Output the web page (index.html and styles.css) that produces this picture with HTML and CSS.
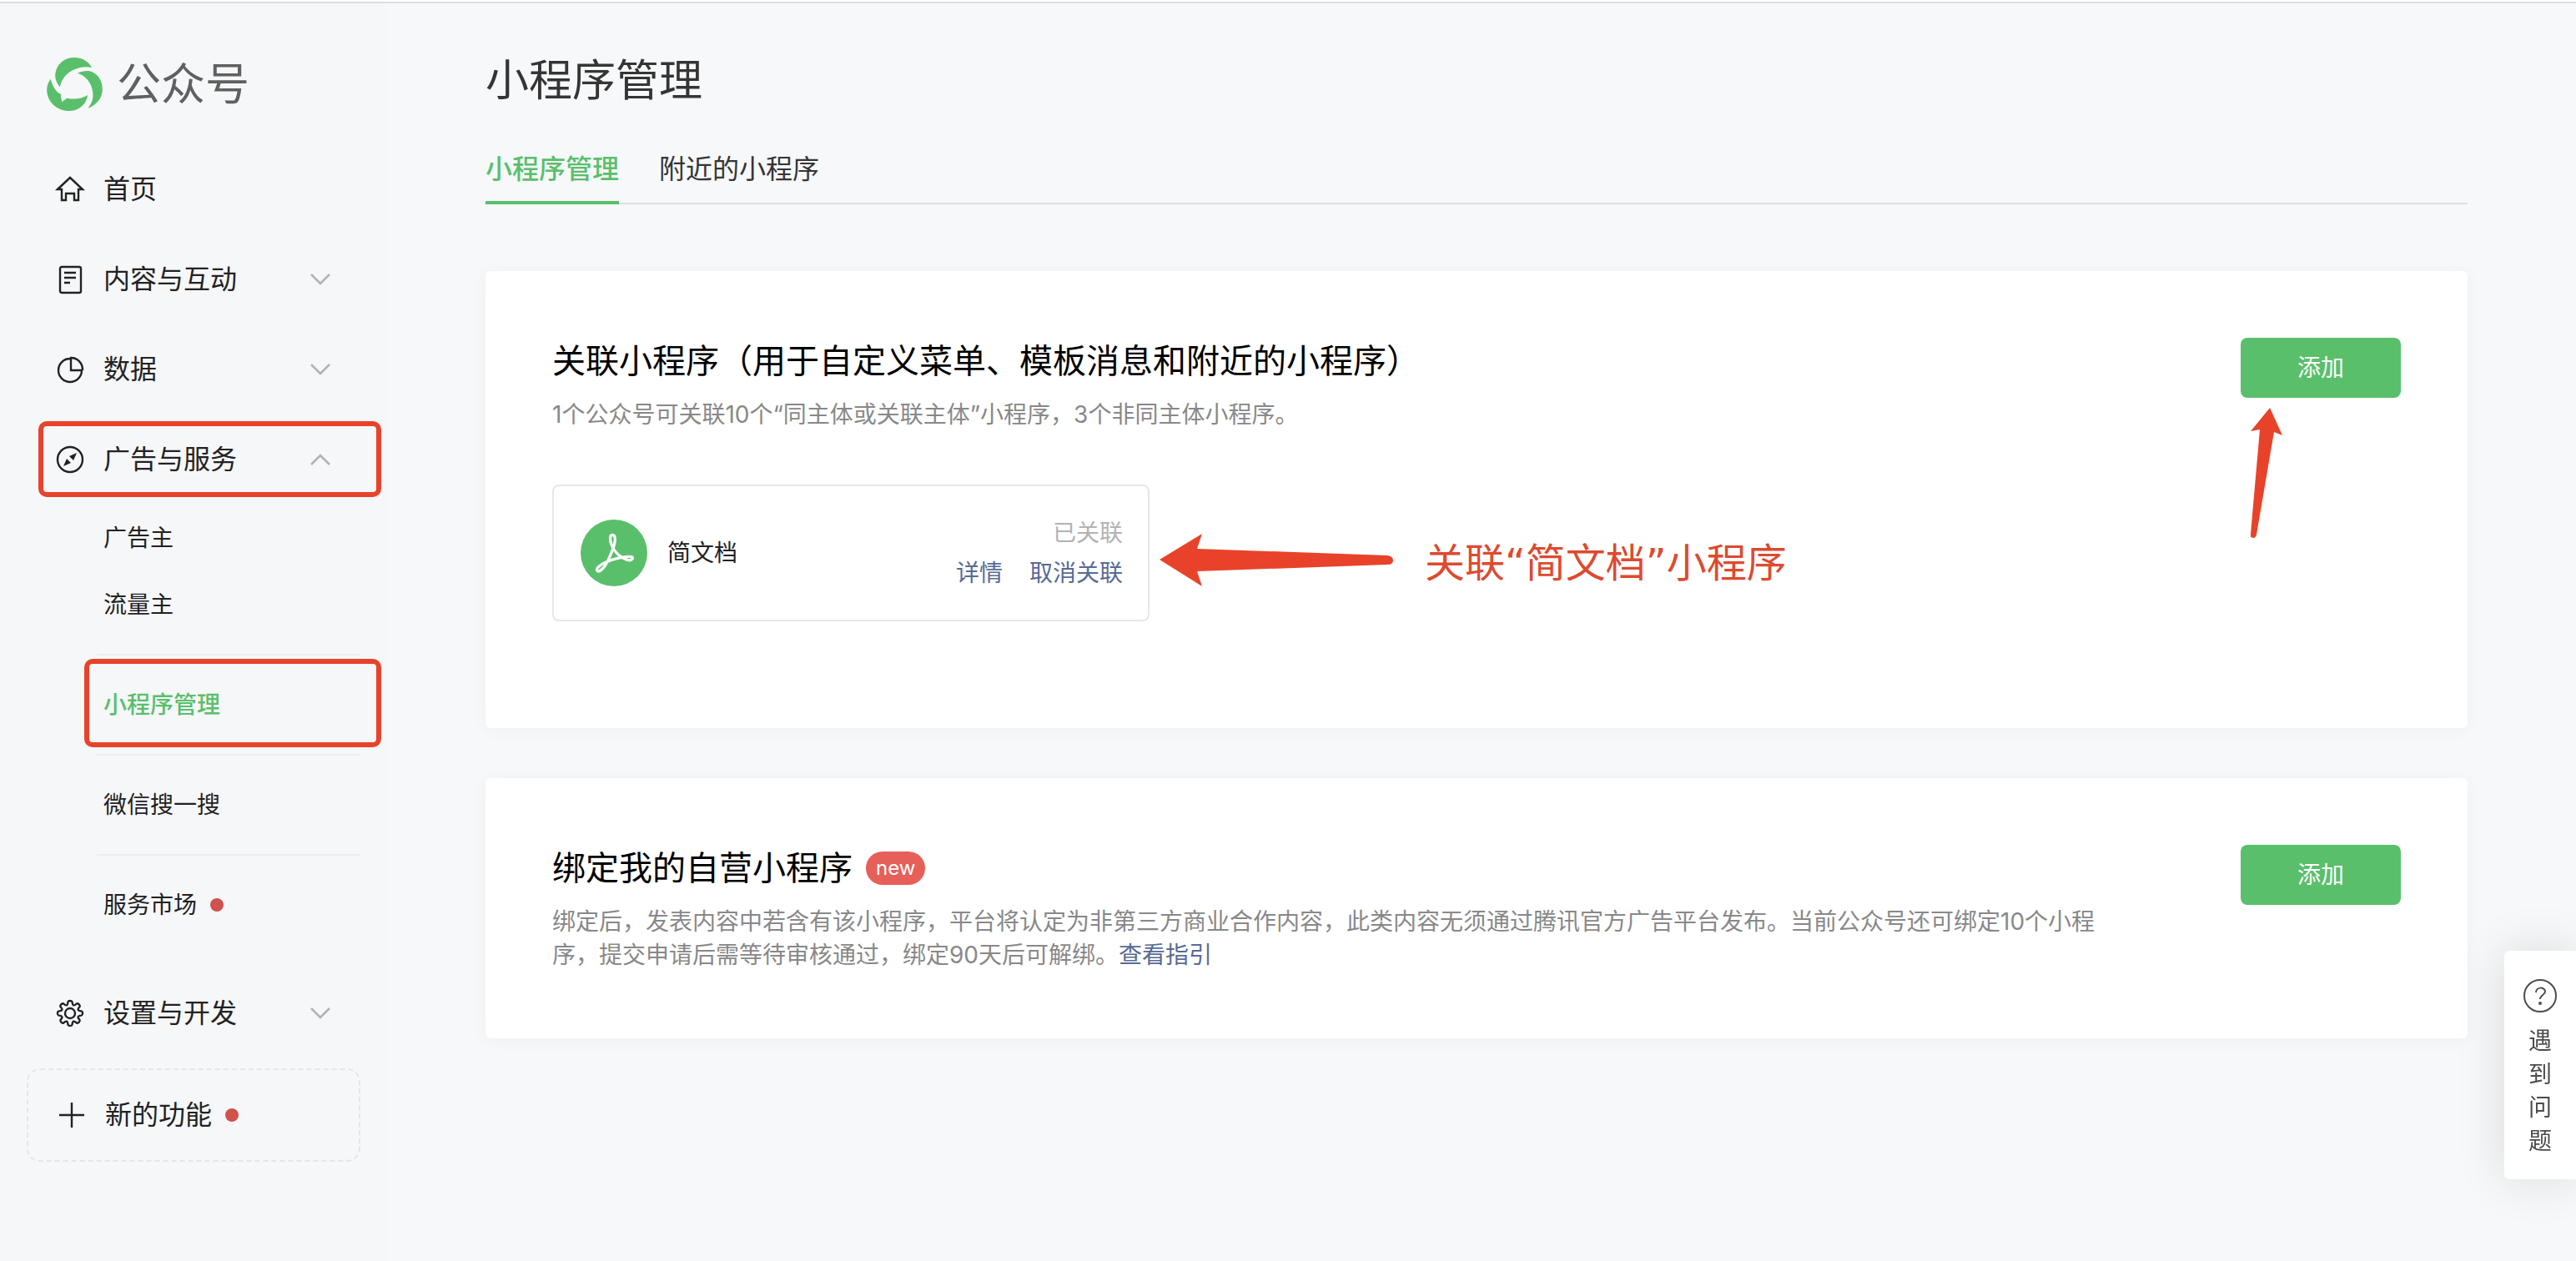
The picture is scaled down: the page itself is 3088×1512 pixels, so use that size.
FILE: index.html
```html
<!DOCTYPE html>
<html lang="zh-CN">
<head>
  <meta charset="UTF-8" />
  <meta name="viewport" content="width=device-width, initial-scale=1.0"/>
  <title>小程序管理 | 公众号</title>
  <link rel="stylesheet" href="styles.css">
</head>
<body>
  <div class="layout">
    <aside class="sidebar">
      <a class="logo" href="#">
        <svg viewBox="18 18 200 192" width="67" height="64" fill="#5abf6b">
          <path d="M65 124C50 106 45 86 50 68C58 36 86 18 117 18C144 18 168 32 180 54C156 49 134 52 112 63C86 76 70 98 65 124Z"/>
          <path d="M129 74C142 67 156 65 168 66C200 72 218 100 218 132C218 164 196 190 166 200C182 180 186 162 183 142C179 108 158 84 129 74Z"/>
          <path d="M32 95C38 122 50 142 70 151L68 156L72 178L90 164C118 170 144 166 165 153C160 188 132 210 98 210C54 210 18 176 18 134C18 119 23 106 32 95Z"/>
        </svg>
        <span>公众号</span>
      </a>

      <nav>
        <ul class="menu">
          <li>
            <a class="menu-item" href="#">
              <svg class="icon" viewBox="0 0 32 32"><path d="M1 16L16 2l15 14h-5v13h-5v-8H11v8H6V16z"/></svg>
              首页
            </a>
          </li>
          <li>
            <button class="menu-item" type="button">
              <svg class="icon" viewBox="0 0 32 32"><rect x="4" y="1" width="25" height="31" rx="2"/><path d="M9 8h14M9 14h14M9 20h7"/></svg>
              内容与互动
              <svg class="arrow" viewBox="0 0 24 14"><path d="M1 1l11 11L23 1"/></svg>
            </button>
          </li>
          <li>
            <button class="menu-item" type="button">
              <svg class="icon" viewBox="0 0 32 32"><path d="M16 3a14 14 0 1 0 14 14H17V2a14 14 0 0 1 14 14v1"/></svg>
              数据
              <svg class="arrow" viewBox="0 0 24 14"><path d="M1 1l11 11L23 1"/></svg>
            </button>
          </li>
          <li>
            <button class="menu-item marked" type="button">
              <svg class="icon" viewBox="0 0 32 32"><circle cx="16" cy="16" r="15"/><path class="fill" d="M24 8l-4 9-5-5zM8 24l4-9 5 5z"/></svg>
              广告与服务
              <svg class="arrow" viewBox="0 0 24 14"><path d="M1 13L12 2l11 11"/></svg>
            </button>
            <ul class="submenu">
              <li><a href="#">广告主</a></li>
              <li><a href="#">流量主</a></li>
              <li class="divided"><a class="active marked" href="#">小程序管理</a></li>
              <li class="divided"><a href="#">微信搜一搜</a></li>
              <li class="divided"><a href="#">服务市场<i class="dot"></i></a></li>
            </ul>
          </li>
          <li>
            <button class="menu-item" type="button">
              <svg class="icon" viewBox="-16 -16 32 32">
                <circle r="6"/>
                <path d="M-2.6 -13.5C-2 -15.6 2 -15.6 2.6 -13.5C3 -9 4.5 -8.5 7.7 -11.4C9.6 -12.6 12.6 -9.6 11.4 -7.7C8.5 -4.5 9 -3 13.5 -2.6C15.6 -2 15.6 2 13.5 2.6C9 3 8.5 4.5 11.4 7.7C12.6 9.6 9.6 12.6 7.7 11.4C4.5 8.5 3 9 2.6 13.5C2 15.6 -2 15.6 -2.6 13.5C-3 9 -4.5 8.5 -7.7 11.4C-9.6 12.6 -12.6 9.6 -11.4 7.7C-8.5 4.5 -9 3 -13.5 2.6C-15.6 2 -15.6 -2 -13.5 -2.6C-9 -3 -8.5 -4.5 -11.4 -7.7C-12.6 -9.6 -9.6 -12.6 -7.7 -11.4C-4.5 -8.5 -3 -9 -2.6 -13.5Z"/>
              </svg>
              设置与开发
              <svg class="arrow" viewBox="0 0 24 14"><path d="M1 1l11 11L23 1"/></svg>
            </button>
          </li>
        </ul>
      </nav>

      <button class="new-feature" type="button">
        <svg class="icon" viewBox="0 0 32 32"><path d="M16 1v30M1 16h30"/></svg>
        新的功能<i class="dot"></i>
      </button>
    </aside>

    <main>
      <h1>小程序管理</h1>
      <div class="tabs">
        <a class="active" href="#">小程序管理</a>
        <a href="#">附近的小程序</a>
      </div>

      <section class="card">
        <div class="card-body">
          <h2>关联小程序（用于自定义菜单、模板消息和附近的小程序）</h2>
          <p>1个公众号可关联10个“同主体或关联主体”小程序，3个非同主体小程序。</p>

          <div class="app">
            <svg class="avatar" viewBox="18 18 240 240">
              <circle cx="138" cy="138" r="120" fill="#5abf6b"/>
              <path d="M133 73C122 73 122 92 130 110C138 132 158 154 186 163C206 168 212 151 196 151C176 150 134 160 108 172C84 182 72 196 78 202C86 210 104 190 114 170C124 150 140 116 142 92C142 80 140 73 133 73Z" fill="none" stroke="#fff" stroke-width="10"/>
            </svg>
            <span class="app-name">简文档</span>
            <div class="app-side">
              <span class="status">已关联</span>
              <div class="app-links">
                <a href="#">详情</a>
                <a href="#">取消关联</a>
              </div>
            </div>
            <div class="note">
              <svg viewBox="0 0 280 64" width="280" height="64"><path d="M0 32L51 1L45 19L273 27Q280 28 280 33Q280 38 273 38L45 46L51 64Z"/></svg>
              <span>关联“简文档”小程序</span>
            </div>
          </div>
        </div>
        <div class="card-action">
          <button class="btn" type="button">添加</button>
          <svg class="pointer" viewBox="0 0 38 156" width="38" height="156"><path d="M23 0L38 33L28 29L7 152Q6 156 3 156Q-1 156 0 151L11 26L0 28Z"/></svg>
        </div>
      </section>

      <section class="card">
        <div class="card-body">
          <h2>绑定我的自营小程序<span class="badge">new</span></h2>
          <p>绑定后，发表内容中若含有该小程序，平台将认定为非第三方商业合作内容，此类内容无须通过腾讯官方广告平台发布。当前公众号还可绑定10个小程序，提交申请后需等待审核通过，绑定90天后可解绑。<a href="#">查看指引</a></p>
        </div>
        <div class="card-action">
          <button class="btn" type="button">添加</button>
        </div>
      </section>
    </main>
  </div>

  <button class="help" type="button">
    <svg viewBox="0 0 40 40" width="40" height="40"><circle cx="20" cy="20" r="19"/><path d="M15 16c0-7 11-7 11-1c0 4-6 4-6 9"/><circle class="fill" cx="20" cy="29" r="1"/></svg>
    <span>遇到问题</span>
  </button>
</body>
</html>
```
FILE: styles.css
```css
* {
  box-sizing: border-box;
}

body {
  margin: 0;
  border-top: 2px solid #fff;
  background: #f7f8fa;
  color: #222;
  font-family: Inter, "Noto Sans CJK SC", sans-serif;
  font-size: 28px;
  line-height: 40px;
}

h1, h2, p, ul {
  margin: 0;
  padding: 0;
  font-weight: 400;
}

ul {
  list-style: none;
}

a {
  color: #576b95;
  text-decoration: none;
}

button {
  font: inherit;
  color: inherit;
  border: none;
  background: none;
  cursor: pointer;
}

.layout {
  display: flex;
  min-height: calc(100vh - 2px);
  border-top: 2px solid #dcdee0;
}

/* sidebar */
.sidebar {
  flex: none;
  width: 464px;
  padding-top: 65px;
  background: #f6f7f9;
}

.logo {
  display: flex;
  align-items: center;
  gap: 17px;
  height: 64px;
  margin: 0 0 40px 56px;
  font-size: 53px;
  color: #606060;
}

.menu-item {
  position: relative;
  display: flex;
  align-items: center;
  gap: 24px;
  width: 100%;
  height: 108px;
  padding: 0 68px;
  font-size: 32px;
  color: #222;
}

.icon {
  flex: none;
  width: 32px;
  height: 32px;
  overflow: visible;
  fill: none;
  stroke: #222;
  stroke-width: 2.4;
}

.icon .fill {
  fill: #222;
  stroke: none;
}

.arrow {
  width: 24px;
  height: 14px;
  margin-left: auto;
  overflow: visible;
  fill: none;
  stroke: #b2b2b2;
  stroke-width: 2.6;
}

.submenu {
  margin-bottom: 36px;
}

.submenu a {
  position: relative;
  display: flex;
  align-items: center;
  height: 80px;
  padding-left: 124px;
  color: #222;
}

.submenu a.active {
  color: #5abf6b;
  font-weight: 500;
}

.divided::before {
  content: "";
  display: block;
  height: 2px;
  margin: 19px 32px 19px 116px;
  background: #ededef;
}

.dot {
  width: 16px;
  height: 16px;
  margin-left: 16px;
  border-radius: 50%;
  background: #d1514c;
}

/* red outline round the items to click */
.marked::after {
  content: "";
  position: absolute;
  inset: 8px 7px 9px 46px;
  border: 6px solid #e8432a;
  border-radius: 10px;
}

.submenu .marked::after {
  inset: -15px 7px -11px 101px;
}

.new-feature {
  display: flex;
  align-items: center;
  width: 400px;
  height: 112px;
  margin: 12px 32px;
  padding: 0 36px;
  border: 2px dashed #e4e5e7;
  border-radius: 16px;
  font-size: 32px;
}

.new-feature .icon {
  margin-right: 24px;
}

/* content */
main {
  flex: 1;
  padding: 57px 130px 60px 118px;
}

h1 {
  font-size: 52px;
  line-height: 72px;
  color: #353535;
}

.tabs {
  display: flex;
  gap: 48px;
  margin: 46px 0 80px;
  border-bottom: 2px solid #dcdee0;
  font-size: 32px;
  line-height: 48px;
}

.tabs a {
  margin-bottom: -2px;
  padding-bottom: 14px;
  border-bottom: 4px solid transparent;
  color: #353535;
}

.tabs a.active {
  border-color: #5abf6b;
  color: #5abf6b;
  font-weight: 500;
}

.card {
  display: flex;
  gap: 160px;
  margin-bottom: 60px;
  padding: 80px;
  border-radius: 6px;
  background: #fff;
  box-shadow: 0 2px 20px rgba(0, 0, 0, 0.04);
}

.card-body {
  flex: 1;
}

.card h2 {
  display: flex;
  align-items: center;
  margin-bottom: 16px;
  font-size: 40px;
  line-height: 56px;
  color: #000;
}

.card p {
  color: #888;
}

.badge {
  margin-left: 16px;
  padding: 0 12px;
  border-radius: 20px;
  background: #e75f59;
  color: #fff;
  font-size: 24px;
  line-height: 40px;
}

.card-action {
  position: relative;
}

.btn {
  width: 192px;
  height: 72px;
  border-radius: 8px;
  background: #5abf6b;
  color: #fff;
}

.pointer {
  position: absolute;
  top: 84px;
  left: 12px;
  fill: #e8432a;
}

.app {
  position: relative;
  display: flex;
  align-items: center;
  gap: 24px;
  width: 716px;
  height: 164px;
  margin: 64px 0 48px;
  padding: 0 30px 0 32px;
  border: 2px solid #e7e7e8;
  border-radius: 8px;
}

.avatar {
  width: 80px;
  height: 80px;
}

.app-side {
  margin-left: auto;
  text-align: right;
  line-height: 48px;
}

.status {
  color: #b2b2b2;
}

.app-links {
  display: flex;
  gap: 32px;
}

.note {
  position: absolute;
  top: 56px;
  left: calc(100% + 14px);
  display: flex;
  align-items: flex-start;
  gap: 38px;
  color: #dd4a30;
  font-family: "DejaVu Sans", "Noto Sans CJK SC", sans-serif;
  font-size: 48px;
  line-height: 72px;
  white-space: nowrap;
}

.note svg {
  fill: #e8432a;
}

/* help tab stuck to the right edge */
.help {
  position: fixed;
  right: 0;
  bottom: 98px;
  display: flex;
  flex-direction: column;
  align-items: center;
  gap: 14px;
  width: 86px;
  padding: 34px 0 26px;
  border-radius: 6px 0 0 6px;
  background: #fff;
  box-shadow: 0 0 60px rgba(0, 0, 0, 0.12);
  color: #4c4c4c;
}

.help span {
  width: 28px;
  line-height: 40px;
}

.help svg {
  fill: none;
  stroke: #4c4c4c;
  stroke-width: 2;
}
```
